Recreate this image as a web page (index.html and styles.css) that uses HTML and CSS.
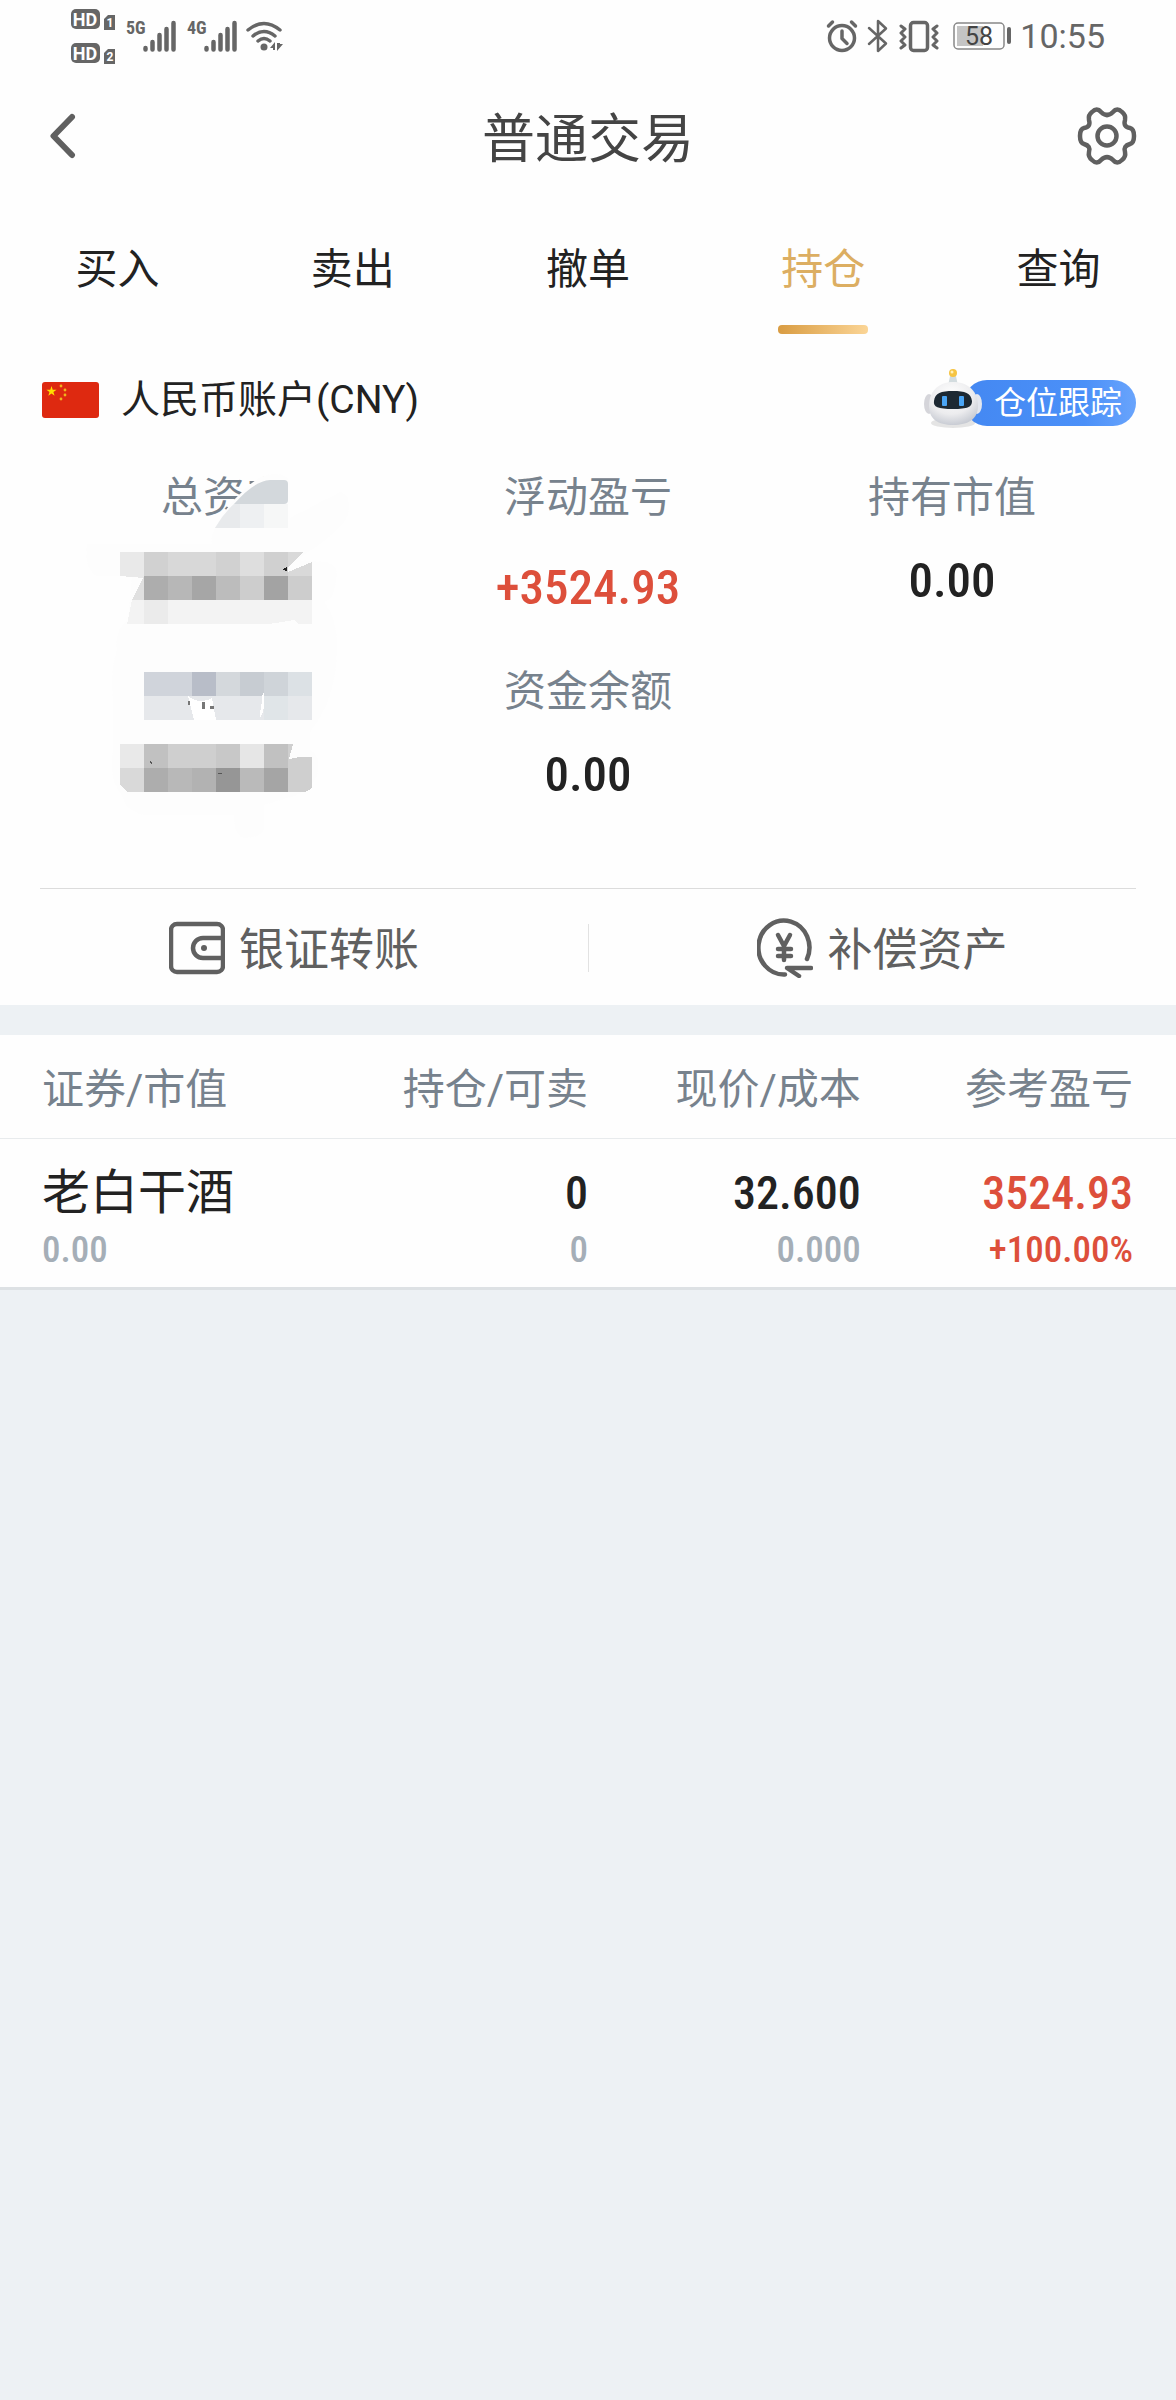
FILE: index.html
```html
<!DOCTYPE html>
<html lang="zh-CN">
<head>
    <meta charset="UTF-8">
    <meta name="viewport" content="width=device-width, initial-scale=1">
    <title>普通交易</title>
    <link rel="stylesheet" href="styles.css">
</head>
<body>
    <div class="top">
        <div class="status-bar">
            <div class="status-group">
                <svg class="icon-hd" width="46" height="56" viewBox="0 0 46 56">
                    <rect x="0" y="1" width="29" height="20" rx="5" fill="#666"/>
                    <text x="14" y="18" class="hd-text">HD</text>
                    <path d="M37 7h7v15H33V11z" fill="#666"/>
                    <text x="39" y="19" class="sim-text">1</text>
                    <rect x="0" y="35" width="29" height="20" rx="5" fill="#666"/>
                    <text x="14" y="52" class="hd-text">HD</text>
                    <path d="M37 41h7v15H33V45z" fill="#666"/>
                    <text x="39" y="53" class="sim-text">2</text>
                </svg>
                <span class="net">5G</span>
                <svg class="icon-signal" width="34" height="32" viewBox="0 0 34 32">
                    <path d="M2.500 28v1.500M9.500 22v7.500M16.500 15v14.500M23.500 9v20.500M30.500 3v26.500" stroke="#666" stroke-width="4.500" stroke-linecap="round"/>
                </svg>
                <span class="net net-second">4G</span>
                <svg class="icon-signal" width="34" height="32" viewBox="0 0 34 32">
                    <path d="M2.500 28v1.500M9.500 22v7.500M16.500 15v14.500M23.500 9v20.500M30.500 3v26.500" stroke="#666" stroke-width="4.500" stroke-linecap="round"/>
                </svg>
                <svg class="icon-wifi" width="38" height="32" viewBox="0 0 38 32">
                    <path d="M2 10Q18-3 34 10M7 16Q18 7 29 16M12 21Q18 16 24 21" fill="none" stroke="#666" stroke-width="3.500" stroke-linecap="round"/>
                    <circle cx="18" cy="27" r="3.500" fill="#666"/>
                    <path d="M24 28l5-6v8h-2v-2zM31 23v8l6-7h-3v-1z" fill="#666"/>
                </svg>
            </div>
            <div class="status-group">
                <svg width="32" height="34" viewBox="0 0 32 34">
                    <circle cx="16" cy="19" r="12.500" fill="none" stroke="#666" stroke-width="3.500"/>
                    <path d="M16 12v7.500l5 5M2.500 7l4-4M29.500 7l-4-4" fill="none" stroke="#666" stroke-width="3.500" stroke-linecap="round" stroke-linejoin="round"/>
                </svg>
                <svg class="icon-bt" width="22" height="34" viewBox="0 0 22 34">
                    <path d="M2 9l17 15.500-8 7.500V2l8 7.500L2 25" fill="none" stroke="#666" stroke-width="2.500" stroke-linecap="round" stroke-linejoin="round"/>
                </svg>
                <svg class="icon-vibrate" width="40" height="34" viewBox="0 0 40 34">
                    <rect x="11.500" y="3.500" width="17" height="28" rx="3" fill="none" stroke="#666" stroke-width="3.500"/>
                    <path d="M2 7l4 3-4 4 4 4-4 4 4 4-4 3M38 7l-4 3 4 4-4 4 4 4-4 4 4 3" fill="none" stroke="#666" stroke-width="3" stroke-linecap="round" stroke-linejoin="round"/>
                </svg>
                <svg class="icon-battery" width="60" height="30" viewBox="0 0 60 30">
                    <rect x="1" y="2" width="50" height="26" rx="4" fill="none" stroke="#888" stroke-width="1.500"/>
                    <rect x="4" y="5" width="26" height="20" fill="#c4c4c4"/>
                    <rect x="54" y="6" width="4" height="17" rx="2" fill="#666"/>
                    <text x="26" y="24" class="battery-text">58</text>
                </svg>
                <span class="clock">10:55</span>
            </div>
        </div>

        <header class="header">
            <button class="icon-button" aria-label="返回">
                <svg width="28" height="48" viewBox="0 0 28 48">
                    <path d="M24 5L5.500 24 24 43" fill="none" stroke="#606060" stroke-width="6" stroke-linecap="round" stroke-linejoin="round"/>
                </svg>
            </button>
            <h1>普通交易</h1>
            <button class="icon-button" aria-label="设置">
                <svg width="60" height="60" viewBox="0 0 60 60">
                    <path d="M24 6Q30 12 36 6Q40 1 45 6Q49 9 48 14Q46 21 53 22Q57 23 57 30Q57 37 53 38Q46 40 48 46Q49 51 45 54Q40 59 36 54Q30 48 24 54Q20 59 15 54Q11 51 12 46Q14 40 7 38Q3 37 3 30Q3 23 7 22Q14 21 12 14Q11 9 15 6Q20 1 24 6Z" fill="none" stroke="#606060" stroke-width="4.500" stroke-linejoin="round"/>
                    <circle cx="30" cy="30" r="9.500" fill="none" stroke="#606060" stroke-width="4.500"/>
                </svg>
            </button>
        </header>

        <nav class="tabs">
            <a href="#">买入</a>
            <a href="#">卖出</a>
            <a href="#">撤单</a>
            <a href="#" class="active">持仓</a>
            <a href="#">查询</a>
        </nav>
    </div>

    <section class="account">
        <div class="account-title">
            <svg class="flag" width="57" height="36" viewBox="0 0 57 36">
                <rect width="57" height="36" rx="3" fill="#de2910"/>
                <path d="M9.500 4l1.200 3.700h3.900l-3.200 2.300 1.200 3.700-3.100-2.300-3.200 2.300 1.200-3.700-3.100-2.300h3.900z" fill="#ffde00"/>
                <g fill="#f0b41c">
                    <circle cx="19" cy="4" r="1.400"/>
                    <circle cx="23" cy="8" r="1.400"/>
                    <circle cx="23" cy="13" r="1.400"/>
                    <circle cx="19" cy="17" r="1.400"/>
                </g>
            </svg>
            <h2>人民币账户(CNY)</h2>
            <button class="track">
                <svg class="robot" width="64" height="64" viewBox="0 0 64 64">
                    <defs>
                        <radialGradient id="head" cx="45%" cy="30%" r="75%">
                            <stop offset="0" stop-color="#fff"/>
                            <stop offset="60%" stop-color="#ececee"/>
                            <stop offset="100%" stop-color="#c2c6cf"/>
                        </radialGradient>
                    </defs>
                    <ellipse cx="31" cy="55" rx="22" ry="5" fill="#000" opacity=".1"/>
                    <path d="M28 8h6l2 10H26z" fill="#d3dcdf"/>
                    <circle cx="31" cy="5" r="4" fill="#f6c443"/>
                    <circle cx="30" cy="4" r="1.500" fill="#fff0b8"/>
                    <ellipse cx="7" cy="36" rx="5" ry="10" fill="#d5d5da"/>
                    <ellipse cx="55" cy="36" rx="5" ry="10" fill="#e4e7ee"/>
                    <path d="M31 14C47 14 56 24 56 38C56 51 46 57 31 57C16 57 7 51 7 38C7 24 16 14 31 14Z" fill="url(#head)"/>
                    <path d="M31 23C43 23 49 25 50 33C50 39 46 41 31 41C16 41 11 39 12 33C13 25 19 23 31 23Z" fill="#1d2933"/>
                    <rect x="20" y="28" width="5" height="10" rx="1" fill="#4aa5f5"/>
                    <rect x="37" y="28" width="5" height="10" rx="1" fill="#4aa5f5"/>
                </svg>
                仓位跟踪
            </button>
        </div>

        <div class="summary">
            <div class="item">
                <div class="label">总资产</div>
                <!-- 金额打码 -->
                <svg class="mosaic" width="272" height="370" viewBox="0 0 272 370">
                    <path d="M-17 74H108Q106 66 111 58Q122 36 140 20Q156 4 170 4Q188 4 186 18V48L236 22Q248 24 244 44Q240 60 192 90L222 92Q236 96 232 110Q230 130 220 132Q234 150 233 180Q232 230 206 262V280Q216 284 214 300Q212 318 190 326L160 335V360Q156 368 140 368Q130 366 130 345H40Q20 340 19 327Q4 310 9 280V230Q6 200 13 180Q10 160 24 150L28 106H-7Q-20 100-17 74Z" fill="#fdfdfd"/>
                    <path d="M111 58Q119 44 130 34H184V58Z" fill="#f6f7f7"/>
                    <path d="M111 58Q119 44 130 34H136V58Z" fill="#e8eaec"/>
                    <path d="M136 34H160V58H136Z" fill="#eef0f2"/>
                    <path d="M130 34Q150 11 166 10H180Q184 10 184 14V30Q184 34 180 34Z" fill="#d3d8dc"/>
                    <g transform="translate(-4 0)" shape-rendering="crispEdges">
                        <path fill="#e9e9e9" d="M20 82h24v26l-24-2z"/>
                        <path fill="#d1d1d1" d="M44 82h24v24H44z"/>
                        <path fill="#d8d8d8" d="M68 82h48v24H68z"/>
                        <path fill="#d1d1d1" d="M116 82h24v24h-24z"/>
                        <path fill="#dedede" d="M140 82h24v24h-24z"/>
                        <path fill="#d0d0d0" d="M164 82h24v24h-24z"/>
                        <path fill="#d9d9d9" d="M188 82h15l-15 15zM188 102l24-10v14h-24z"/>
                        <path fill="#e0e0e0" d="M44 106v24H32z"/>
                        <path fill="#adadad" d="M44 106h24v24H44z"/>
                        <path fill="#b7b7b7" d="M68 106h24v24H68z"/>
                        <path fill="#a6a6a6" d="M92 106h24v24H92z"/>
                        <path fill="#bcbcbc" d="M116 106h24v24h-24z"/>
                        <path fill="#cdcdcd" d="M140 106h24v24h-24z"/>
                        <path fill="#a3a3a3" d="M164 106h24v24h-24z"/>
                        <path fill="#cdcdcd" d="M188 106h24v24h-24z"/>
                        <path fill="#f3f3f3" d="M32 130h180v24h-14l-4-4-18 3-8 1H27z"/>
                        <path fill="#ebebeb" d="M44 130h24v24H44z"/>
                        <path fill="#222" d="M182 100l5-3v4z"/>

                        <path fill="#d0d4db" d="M44 202h48v24H44z"/>
                        <path fill="#b8bdc8" d="M92 202h24v24H92z"/>
                        <path fill="#d4d8dc" d="M116 202h24v24h-24z"/>
                        <path fill="#c7ccd2" d="M140 202h24v24h-24z"/>
                        <path fill="#cfd4d9" d="M164 202h24v24h-24z"/>
                        <path fill="#dce1e5" d="M188 202h24v24h-24z"/>
                        <path fill="#e6e8eb" d="M44 226h168v24H44z"/>
                        <path fill="#e0e5e8" d="M164 226h24v24h-24z"/>
                        <path fill="#fff" d="M88 226q12 9 24 2l4 22H94z"/>
                        <path fill="#fff" d="M164 222q2 16-4 26v-5q2-10 2-17z"/>
                        <path fill="#777" d="M102 232h3v7h-3zM110 236h4v3h-4zM88 231h2v4h-2z"/>

                        <path fill="#e9e9e9" d="M20 274h24v24H20z"/>
                        <path fill="#c1c1c1" d="M44 274h24v24H44z"/>
                        <path fill="#cfcfcf" d="M68 274h48v24H68z"/>
                        <path fill="#c8c8c8" d="M116 274h24v24h-24z"/>
                        <path fill="#e6e6e6" d="M140 274h24v24h-24z"/>
                        <path fill="#c1c1c1" d="M164 274h24v24h-24z"/>
                        <path fill="#cfcfcf" d="M188 274h5l-4 15q12-3 23-2v11h-24z"/>
                        <path fill="#d9d9d9" d="M20 298h24v24H27l-7-8z"/>
                        <path fill="#adadad" d="M44 298h24v24H44z"/>
                        <path fill="#b8b8b8" d="M68 298h24v24H68z"/>
                        <path fill="#b2b2b2" d="M92 298h24v24H92z"/>
                        <path fill="#969696" d="M116 298h24v24h-24z"/>
                        <path fill="#bababa" d="M140 298h24v24h-24z"/>
                        <path fill="#a5a5a5" d="M164 298h24v24h-24z"/>
                        <path fill="#cfcfcf" d="M188 298h24v20q-4 4-10 4h-14z"/>
                        <path fill="#555" d="M50 291l2 2-1 1zM118 303h4v1h-4z"/>
                    </g>
                </svg>
            </div>
            <div class="item">
                <div class="label">浮动盈亏</div>
                <div class="value value-profit">+3524.93</div>
            </div>
            <div class="item">
                <div class="label">持有市值</div>
                <div class="value">0.00</div>
            </div>
            <div class="item item-second">
                <div class="label">资金余额</div>
                <div class="value">0.00</div>
            </div>
        </div>

        <div class="actions">
            <button class="action">
                <svg width="56" height="56" viewBox="0 0 56 56">
                    <rect x="2" y="4" width="52" height="48" rx="6" fill="none" stroke="#606060" stroke-width="4.500"/>
                    <path d="M54 18H34a10 10 0 0 0 0 20h20" fill="none" stroke="#606060" stroke-width="4.500"/>
                    <circle cx="35" cy="28" r="3" fill="#606060"/>
                </svg>
                <span>银证转账</span>
            </button>
            <button class="action">
                <svg width="56" height="60" viewBox="0 0 56 60">
                    <path d="M28 56.500A25.500 27 0 1 1 50 41" fill="none" stroke="#606060" stroke-width="4.500" stroke-linecap="round"/>
                    <path d="M54 50H30l12 8" fill="none" stroke="#606060" stroke-width="4.500" stroke-linecap="round" stroke-linejoin="round"/>
                    <path d="M21 17l6 11 6-11M27 28v14M21 31h13M21 38h13" fill="none" stroke="#606060" stroke-width="4.500" stroke-linecap="round"/>
                </svg>
                <span>补偿资产</span>
            </button>
        </div>
    </section>

    <table class="positions">
        <thead>
            <tr>
                <th>证券/市值</th>
                <th>持仓/可卖</th>
                <th>现价/成本</th>
                <th>参考盈亏</th>
            </tr>
        </thead>
        <tbody>
            <tr>
                <td><div class="name">老白干酒</div><div class="sub">0.00</div></td>
                <td><div class="num">0</div><div class="sub">0</div></td>
                <td><div class="num">32.600</div><div class="sub">0.000</div></td>
                <td class="up"><div class="num">3524.93</div><div class="sub">+100.00%</div></td>
            </tr>
        </tbody>
    </table>
</body>
</html>
```

FILE: styles.css
```css
* {
    box-sizing: border-box;
}
body {
    margin: 0;
    background-color: #edf1f4;
    color: #222;
    font-family: Roboto, "Noto Sans CJK SC", sans-serif;
}
h1, h2 {
    margin: 0;
    font-weight: 400;
}
svg {
    display: block;
    flex-shrink: 0;
}
button {
    padding: 0;
    border: none;
    background: none;
    font-family: inherit;
    color: inherit;
    cursor: pointer;
}
.top, .account {
    background-color: #fefefe;
}

/* status bar */
.status-bar {
    display: flex;
    justify-content: space-between;
    height: 72px;
    padding: 0 71px;
    color: #666;
}
.status-group {
    display: flex;
    align-items: center;
}
.icon-hd {
    margin-right: 9px;
}
.hd-text {
    font: 700 18px Roboto, sans-serif;
    fill: #fff;
    text-anchor: middle;
}
.sim-text {
    font: 700 12px Roboto, sans-serif;
    fill: #fff;
    text-anchor: middle;
}
.net {
    width: 17px;
    margin-bottom: 16px;
    font: 700 18px/18px "Roboto Condensed", "Liberation Sans Narrow", Roboto, sans-serif;
}
.net-second {
    margin-left: 10px;
}
.icon-wifi {
    margin-left: 8px;
}
.icon-bt {
    margin-left: 9px;
}
.icon-vibrate {
    margin-left: 10px;
}
.icon-battery {
    margin-left: 14px;
}
.battery-text {
    font: 400 25px Roboto, sans-serif;
    fill: #444;
    text-anchor: middle;
}
.clock {
    margin-left: 7px;
    font-size: 34px;
    line-height: 40px;
}

/* header */
.header {
    display: flex;
    align-items: center;
    justify-content: space-between;
    height: 128px;
    padding: 0 39px 0 48px;
}
.header h1 {
    padding-top: 7px;
    font-size: 53px;
    line-height: 72px;
    color: #444;
}
.icon-button {
    display: flex;
    width: 60px;
}
.icon-button:first-child {
    width: 51px;
}

/* tabs */
.tabs {
    display: grid;
    grid-template-columns: repeat(5, 1fr);
}
.tabs a {
    display: flex;
    flex-direction: column;
    align-items: center;
    height: 136px;
    padding-top: 40px;
    font-size: 42px;
    line-height: 60px;
    color: #222;
    text-decoration: none;
}
.tabs a.active {
    color: #dcae62;
}
.tabs a.active::after {
    content: "";
    width: 90px;
    height: 9px;
    margin-top: 25px;
    border-radius: 4px;
    background: linear-gradient(to right, #d99c42, #fbd596);
}

/* account */
.account-title {
    display: flex;
    align-items: center;
    height: 128px;
    padding: 0 40px 0 42px;
}
.account-title h2 {
    margin-left: 22px;
    font-size: 39px;
    line-height: 56px;
}
.track {
    position: relative;
    height: 46px;
    margin: 6px 0 0 auto;
    padding: 0 14px 0 30px;
    border-radius: 23px;
    background: linear-gradient(to right, #4488f2, #4b90f8 70%, #69a4fc);
    color: #fff;
    font-size: 32px;
    line-height: 46px;
}
.robot {
    position: absolute;
    left: -42px;
    bottom: -6px;
}
.summary {
    display: grid;
    grid-template-columns: repeat(3, 1fr);
    margin: 0 40px;
    padding: 0 2px 36px;
    border-bottom: 1px solid #dcdcdc;
}
.item {
    position: relative;
    height: 194px;
    padding-top: 4px;
    text-align: center;
}
.item-second {
    grid-column: 2;
}
.label {
    font-size: 42px;
    line-height: 60px;
    color: #77828d;
}
.value {
    margin-top: 23px;
    font: 500 49px/60px "Roboto Condensed", "Liberation Sans Narrow", Roboto, sans-serif;
}
.value-profit {
    margin-top: 30px;
    color: #dd4f3b;
}
.mosaic {
    position: absolute;
    top: 6px;
    left: 62px;
    overflow: visible;
}
.actions {
    display: grid;
    grid-template-columns: 1fr 1fr;
    padding: 35px 0 33px;
}
.action {
    display: flex;
    align-items: center;
    justify-content: center;
    gap: 14px;
    height: 48px;
    font-size: 45px;
    line-height: 48px;
    color: #606060;
}
.action span {
    padding-top: 5px;
}
.action + .action {
    border-left: 1px solid #e2e2e2;
}

/* positions */
.positions {
    width: 100%;
    margin-top: 30px;
    table-layout: fixed;
    border-collapse: collapse;
    background-color: #fefefe;
    border-bottom: 3px solid #dde1e4;
}
.positions th, .positions td {
    width: 23%;
    padding: 0;
    text-align: right;
}
.positions th:first-child, .positions td:first-child {
    width: 27%;
    padding-left: 42px;
    text-align: left;
}
.positions th:nth-child(3) {
    width: 23.2%;
}
.positions th:last-child, .positions td:last-child {
    width: auto;
    padding-right: 43px;
}
.positions th {
    height: 103px;
    padding-bottom: 2px;
    border-bottom: 1px solid #e8ebed;
    font-size: 42px;
    font-weight: 400;
    color: #77828d;
}
.positions td {
    height: 150px;
    vertical-align: top;
    padding-top: 22px;
}
.name {
    font-size: 48px;
    line-height: 64px;
}
.num {
    font: 500 46px/64px "Roboto Condensed", "Liberation Sans Narrow", Roboto, sans-serif;
}
.sub {
    font: 500 37px/50px "Roboto Condensed", "Liberation Sans Narrow", Roboto, sans-serif;
    color: #a5aeb7;
}
.up, .up .sub {
    color: #dd4f3b;
}
```
